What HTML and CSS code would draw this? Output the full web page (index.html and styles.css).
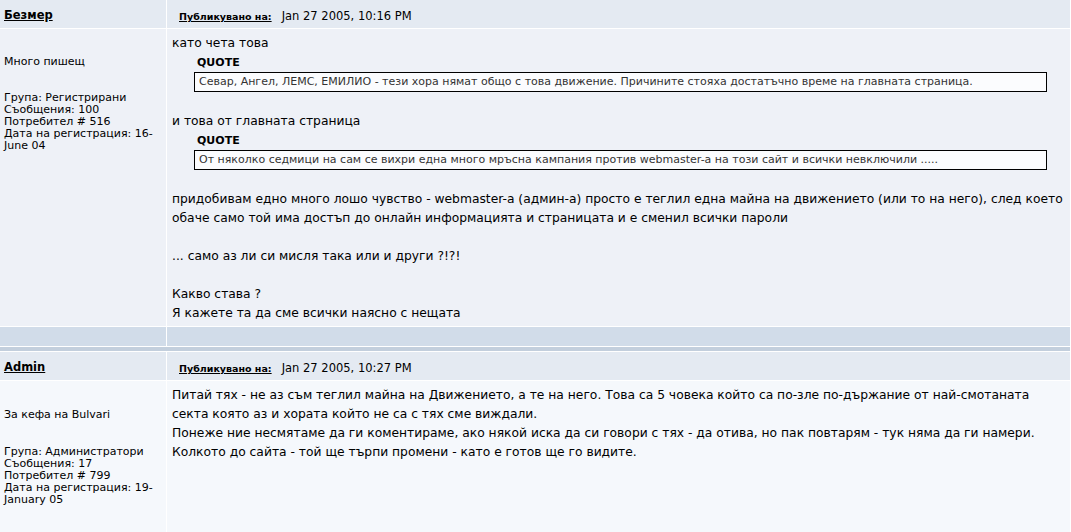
FILE: index.html
```html
<!DOCTYPE html>
<html lang="bg">
<head>
<meta charset="utf-8">
<title>Форум</title>
<link rel="stylesheet" href="styles.css">
</head>
<body>
<div class="topic">
  <div class="post">
    <div class="cell head author"><a href="#">Безмер</a></div>
    <div class="cell head date"><a href="#">Публикувано на:</a> <span class="when">Jan 27 2005, 10:16 PM</span></div>
    <div class="cell info row1">
      <div class="title">Много пишещ</div>
      <div class="stats">Група: Регистрирани<br>Съобщения: 100<br>Потребител # 516<br>Дата на регистрация: 16-June 04</div>
    </div>
    <div class="cell body row1">
      като чета това
      <div class="quotetop">QUOTE</div>
      <div class="quotemain">Севар, Ангел, ЛЕМС, ЕМИЛИО - тези хора нямат общо с това движение. Причините стояха достатъчно време на главната страница.</div>
      <br>и това от главната страница
      <div class="quotetop">QUOTE</div>
      <div class="quotemain">От няколко седмици на сам се вихри една много мръсна кампания против webmaster-а на този сайт и всички невключили .....</div>
      <br>придобивам едно много лошо чувство - webmaster-а (админ-а) просто е теглил една майна на движението (или то на него), след което обаче само той има достъп до онлайн информацията и страницата и е сменил всички пароли<br><br>... само аз ли си мисля така или и други ?!?!<br><br>Какво става ?<br>Я кажете та да сме всички наясно с нещата
    </div>
    <div class="cell foot"></div>
    <div class="cell foot"></div>
  </div>
  <div class="divider"></div>
  <div class="post">
    <div class="cell head author"><a href="#">Admin</a></div>
    <div class="cell head date"><a href="#">Публикувано на:</a> <span class="when">Jan 27 2005, 10:27 PM</span></div>
    <div class="cell info row2">
      <div class="title title2">За кефа на Bulvari</div>
      <div class="stats">Група: Администратори<br>Съобщения: 17<br>Потребител # 799<br>Дата на регистрация: 19-January 05</div>
    </div>
    <div class="cell body row2">
      Питай тях - не аз съм теглил майна на Движението, а те на него. Това са 5 човека който са по-зле по-държание от най-смотаната секта която аз и хората който не са с тях сме виждали.<br>Понеже ние несмятаме да ги коментираме, ако някой иска да си говори с тях - да отива, но пак повтарям - тук няма да ги намери.<br>Колкото до сайта - той ще търпи промени - като е готов ще го видите.
    </div>
  </div>
</div>
</body>
</html>
```

FILE: styles.css
```css
html, body {
  margin: 0;
  padding: 0;
  background: #ffffff;
}
body {
  font-family: "DejaVu Sans", Verdana, sans-serif;
  color: #000;
  height: 532px;
  overflow: hidden;
}
.topic {
  width: 1070px;
}
.post {
  display: grid;
  grid-template-columns: 166px 1fr;
  column-gap: 1px;
  row-gap: 1px;
  background: #ffffff;
  padding-bottom: 1px;
}
.cell {
  box-sizing: border-box;
}
.head {
  background: #e4eaf2;
  height: 28px;
  line-height: 30px;
  white-space: nowrap;
}
.author {
  padding-left: 4px;
  font-size: 11.5px;
  font-weight: bold;
}
.author a {
  color: #000;
  text-decoration: underline;
}
.date {
  padding-left: 12px;
  font-size: 9.5px;
  line-height: 32px;
}
.date a {
  color: #000;
  font-weight: bold;
  text-decoration: underline;
}
.date .when {
  font-size: 11.5px;
  margin-left: 7px;
}
.row1 { background: #eef1f7; }
.row2 { background: #f5f8fc; height: 151px; }
.info {
  padding: 27px 4px 0 4px;
  font-size: 11px;
  line-height: 12px;
}
.info .title {
  margin-bottom: 24px;
}
.info .title2 {
  margin-bottom: 25px;
}
.body {
  padding: 5px 2px 3px 5px;
  font-size: 12.3px;
  line-height: 19px;
}
.row2.body {
  padding-top: 5px;
}
.row2.info {
  padding-top: 28px;
}
.quotetop {
  margin-left: 25px;
  font-size: 11px;
  font-weight: bold;
  line-height: 19px;
}
.quotemain {
  margin-left: 22px;
  margin-right: 21px;
  margin-bottom: 1px;
  border: 1px solid #000;
  background: #fbfcfe;
  color: #333;
  font-size: 11px;
  line-height: 18px;
  padding: 0 4px;
}
.foot {
  background: #d1dce9;
  height: 19px;
}
.divider {
  height: 4px;
  background: #c3cfdd;
  margin-bottom: 1px;
}
```
